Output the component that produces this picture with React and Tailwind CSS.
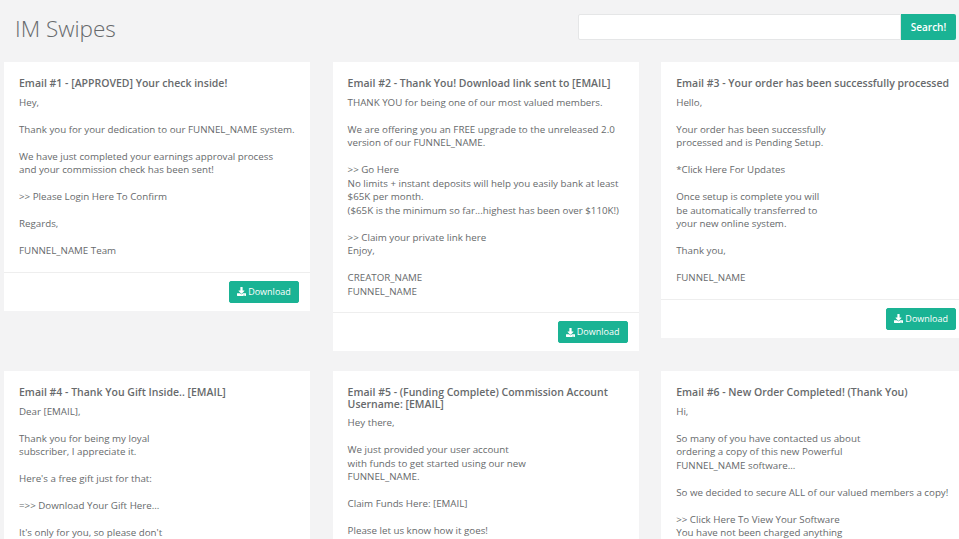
import React from 'react';
import { FaDownload } from 'react-icons/fa';

const emails = [
  {
    id: 1,
    title: 'Email #1 - [APPROVED] Your check inside!',
    body: `Hey,

Thank you for your dedication to our FUNNEL_NAME system.

We have just completed your earnings approval process
and your commission check has been sent!

>> Please Login Here To Confirm

Regards,

FUNNEL_NAME Team`,
  },
  {
    id: 2,
    title: 'Email #2 - Thank You! Download link sent to [EMAIL]',
    body: `THANK YOU for being one of our most valued members.

We are offering you an FREE upgrade to the unreleased 2.0
version of our FUNNEL_NAME.

>> Go Here
No limits + instant deposits will help you easily bank at least
$65K per month.
($65K is the minimum so far...highest has been over $110K!)

>> Claim your private link here
Enjoy,

CREATOR_NAME
FUNNEL_NAME`,
  },
  {
    id: 3,
    title: 'Email #3 - Your order has been successfully processed',
    body: `Hello,

Your order has been successfully
processed and is Pending Setup.

*Click Here For Updates

Once setup is complete you will
be automatically transferred to
your new online system.

Thank you,

FUNNEL_NAME`,
  },
  {
    id: 4,
    title: 'Email #4 - Thank You Gift Inside.. [EMAIL]',
    body: `Dear [EMAIL],

Thank you for being my loyal
subscriber, I appreciate it.

Here's a free gift just for that:

=>> Download Your Gift Here...

It's only for you, so please don't`,
  },
  {
    id: 5,
    title: 'Email #5 - (Funding Complete) Commission Account Username: [EMAIL]',
    body: `Hey there,

We just provided your user account
with funds to get started using our new
FUNNEL_NAME.

Claim Funds Here: [EMAIL]

Please let us know how it goes!`,
  },
  {
    id: 6,
    title: 'Email #6 - New Order Completed! (Thank You)',
    body: `Hi,

So many of you have contacted us about
ordering a copy of this new Powerful
FUNNEL_NAME software...

So we decided to secure ALL of our valued members a copy!

>> Click Here To View Your Software
You have not been charged anything`,
  },
];

const EmailCard = ({ email }) => (
  <div className="bg-white">
    <div className="px-[15px] pt-[16px] pb-[14px]">
      <h4 className="text-[10.5px] leading-[11.5px] font-semibold text-[#676a6c] mb-[6px]">{email.title}</h4>
      <p className="text-[9.75px] leading-[13.5px] text-[#676a6c] whitespace-pre-line">{email.body}</p>
    </div>
    <div className="border-t border-[#eeeeee] flex justify-end px-[11px] py-[8px]">
      <button className="bg-[#1ab394] border border-[#1ab394] rounded-[2px] text-white text-[9px] font-medium h-[22px] w-[70px] flex items-center justify-center gap-[2px]">
        <FaDownload className="w-[9px] h-[9px]" />
        Download
      </button>
    </div>
  </div>
);

export default function App() {
  return (
    <div className="h-[539px] w-[959px] overflow-hidden bg-[#f3f3f4] font-['Open_Sans',sans-serif]">
      <div className="flex justify-between items-start h-[62px] pl-[15px] pr-[3px] pt-[14px]">
        <h2 className="text-[22.5px] leading-[30px] font-light text-[#676a6c]">IM Swipes</h2>
        <div className="flex h-[26px]">
          <input type="text" className="w-[323px] bg-white border border-[#e5e6e7] rounded-l-[2px]" />
          <button className="w-[55px] bg-[#1ab394] text-white text-[10px] font-semibold rounded-r-[2px]">Search!</button>
        </div>
      </div>
      <div className="grid grid-cols-[306px_306px_306px] gap-x-[22.6px] gap-y-[20px] items-start pl-[4px]">
        {emails.map((email) => (
          <EmailCard key={email.id} email={email} />
        ))}
      </div>
    </div>
  );
}
